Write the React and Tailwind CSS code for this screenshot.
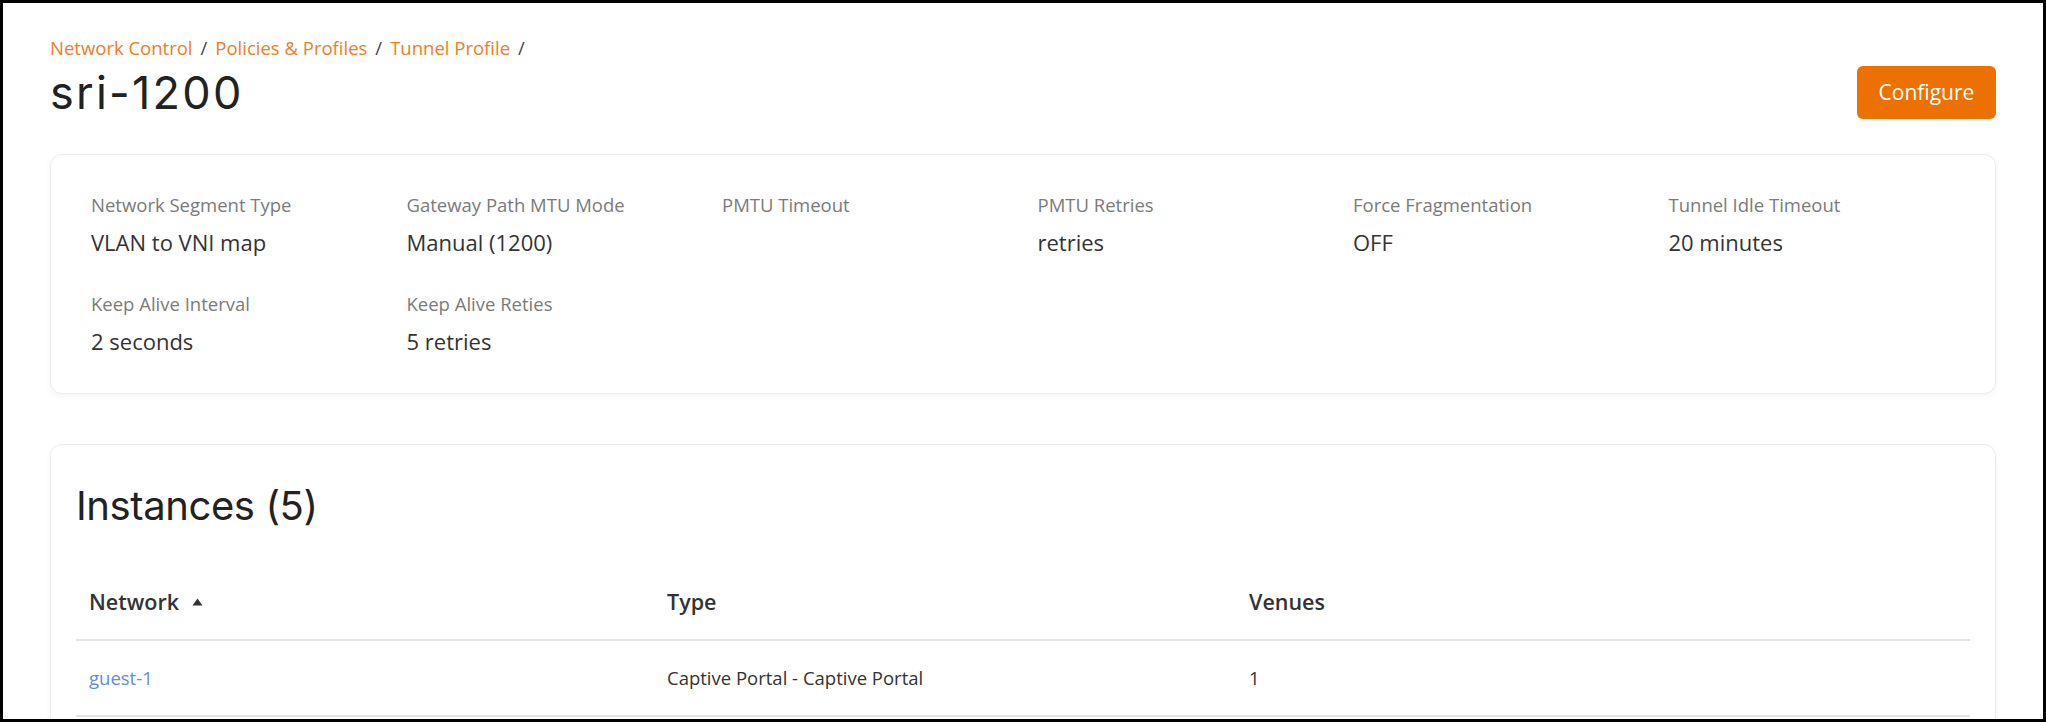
const DETAILS = [
  { label: "Network Segment Type", value: "VLAN to VNI map" },
  { label: "Gateway Path MTU Mode", value: "Manual (1200)" },
  { label: "PMTU Timeout", value: "" },
  { label: "PMTU Retries", value: "retries" },
  { label: "Force Fragmentation", value: "OFF" },
  { label: "Tunnel Idle Timeout", value: "20 minutes" },
  { label: "Keep Alive Interval", value: "2 seconds" },
  { label: "Keep Alive Reties", value: "5 retries" },
];

const INSTANCES = [
  { network: "guest-1", type: "Captive Portal - Captive Portal", venues: 1 },
];

const crumbs = ["Network Control", "Policies & Profiles", "Tunnel Profile"];

function Breadcrumb() {
  return (
    <div className="flex items-center text-[18.5px] leading-[24px]">
      {crumbs.map((c) => (
        <span key={c} className="flex items-center">
          <a className="text-[#f07d28] cursor-pointer">{c}</a>
          <span className="mx-[8px] text-[#444]">/</span>
        </span>
      ))}
    </div>
  );
}

function DetailsCard() {
  return (
    <div className="mt-[34px] rounded-[12px] border border-[#ececec] bg-white pl-[40px] pr-[11px] pt-[38px] pb-[38px] shadow-[0_2px_6px_rgba(0,0,0,0.05)]">
      <div className="grid grid-cols-6 gap-y-[36px]">
        {DETAILS.map((d) => (
          <div key={d.label}>
            <div className="text-[18.5px] leading-[24px] text-[#7b7b7b]">{d.label}</div>
            <div className="mt-[11px] h-[28px] text-[22px] leading-[28px] text-[#333]">{d.value}</div>
          </div>
        ))}
      </div>
    </div>
  );
}

function InstancesCard() {
  return (
    <div className="mt-[50px] rounded-[12px] border border-[#ececec] bg-white px-[25px] pt-[36px] pb-[30px] shadow-[0_2px_6px_rgba(0,0,0,0.05)]">
      <h2
        className="text-[40px] leading-[50px] text-[#222] font-normal tracking-[-0.01em]"
        style={{ fontFamily: "Inter, 'Open Sans', sans-serif" }}
      >
        Instances ({INSTANCES.length + 4})
      </h2>
      <div className="mt-[33px]">
        <div className="grid grid-cols-[578px_582px_1fr] border-b-2 border-[#e3e3e3] text-[21.5px] leading-[28px] font-semibold text-[#333]">
          <div className="flex items-center px-[13px] pt-[24px] pb-[23px]">
            Network
            <svg className="ml-[13px]" width="11" height="8" viewBox="0 0 11 8">
              <path d="M5.5 0.5L10.5 7.5H0.5Z" fill="#333" />
            </svg>
          </div>
          <div className="px-[13px] pt-[24px] pb-[23px]">Type</div>
          <div className="px-[13px] pt-[24px] pb-[23px]">Venues</div>
        </div>
        {INSTANCES.map((r) => (
          <div key={r.network} className="grid grid-cols-[578px_582px_1fr] border-b-2 border-[#e3e3e3] text-[18.5px] leading-[24px] text-[#333]">
            <div className="px-[13px] py-[25px]">
              <a className="text-[#5b8ee6] cursor-pointer">{r.network}</a>
            </div>
            <div className="px-[13px] py-[25px]">{r.type}</div>
            <div className="px-[13px] py-[25px]">{r.venues}</div>
          </div>
        ))}
      </div>
    </div>
  );
}

export default function App() {
  return (
    <div
      className="h-[722px] overflow-hidden border-[3px] border-black bg-white box-border"
      style={{ fontFamily: "'Open Sans', 'Noto Sans', sans-serif" }}
    >
      <div className="px-[47px] pt-[33px]">
        <div className="flex items-start justify-between">
          <div>
            <Breadcrumb />
            <h1
              className="mt-[6px] text-[45px] leading-[54px] font-normal text-[#222] tracking-[0.05em]"
              style={{ fontFamily: "Inter, 'Open Sans', sans-serif" }}
            >
              sri-1200
            </h1>
          </div>
          <button className="mt-[30px] h-[53px] w-[139px] rounded-[6px] bg-[#ec7100] text-[21px] text-white">
            Configure
          </button>
        </div>
        <DetailsCard />
        <InstancesCard />
      </div>
    </div>
  );
}
